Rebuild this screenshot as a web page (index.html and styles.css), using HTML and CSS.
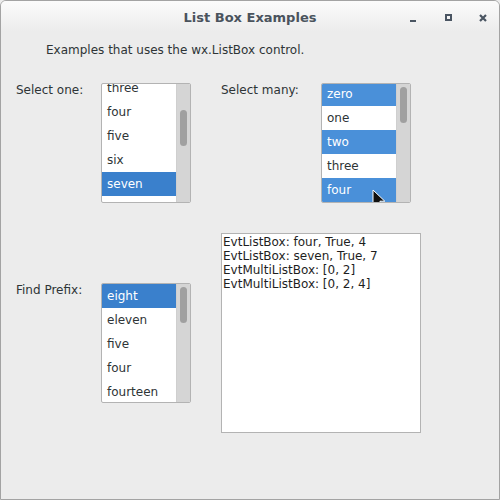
FILE: index.html
```html
<!DOCTYPE html>
<html>
<head>
<meta charset="utf-8">
<link rel="stylesheet" href="styles.css">
</head>
<body>
<div class="window">
  <div class="titlebar">
    <div class="title">List Box Examples</div>
    <div class="controls">
      <span class="ctl min"></span>
      <span class="ctl max"></span>
      <span class="ctl close">
        <svg width="8" height="8" viewBox="0 0 8 8"><path d="M1 1L7 7M7 1L1 7" stroke="#4a5562" stroke-width="2.2"/></svg>
      </span>
    </div>
  </div>
  <div class="intro">Examples that uses the wx.ListBox control.</div>
  <div class="row top">
    <div class="label l1">Select one:</div>
    <div class="listbox">
      <div class="items scrolled">
        <div class="item">three</div>
        <div class="item">four</div>
        <div class="item">five</div>
        <div class="item">six</div>
        <div class="item sel">seven</div>
        <div class="item">eight</div>
      </div>
      <div class="scrollbar"><div class="thumb t1"></div></div>
    </div>
    <div class="label l2">Select many:</div>
    <div class="listbox">
      <div class="items scrolled2">
        <div class="item sel2">zero</div>
        <div class="item">one</div>
        <div class="item sel2">two</div>
        <div class="item">three</div>
        <div class="item sel2">four</div>
      </div>
      <div class="scrollbar"><div class="thumb t2"></div></div>
      <svg class="cursor" width="14" height="21" viewBox="0 0 14 21"><path d="M1 1L1 17L5 13.2L8 19.8L10.8 18.5L7.9 12.2L12.8 12.2Z" fill="#111" stroke="#fff" stroke-width="1"/></svg>
    </div>
  </div>
  <div class="row bottom">
    <div class="label l1 l3">Find Prefix:</div>
    <div class="listbox lb3">
      <div class="items">
        <div class="item sel">eight</div>
        <div class="item">eleven</div>
        <div class="item">five</div>
        <div class="item">four</div>
        <div class="item">fourteen</div>
      </div>
      <div class="scrollbar"><div class="thumb t2"></div></div>
    </div>
    <div class="log">
      <div>EvtListBox: four, True, 4</div>
      <div>EvtListBox: seven, True, 7</div>
      <div>EvtMultiListBox: [0, 2]</div>
      <div>EvtMultiListBox: [0, 2, 4]</div>
    </div>
  </div>
</div>
</body>
</html>
```
FILE: styles.css
```css
html, body {
  margin: 0;
  padding: 0;
  background: #ececec;
}
body {
  font-family: "DejaVu Sans", sans-serif;
  font-size: 12px;
  color: #2e3436;
}
.window {
  width: 500px;
  height: 500px;
  box-sizing: border-box;
  border: 1px solid #a3a3a3;
  border-radius: 6px 6px 0 0;
  background: #ececec;
  overflow: hidden;
}
.titlebar {
  height: 30px;
  position: relative;
  background: linear-gradient(#fbfbfb, #ececec);
  display: flex;
  align-items: center;
  justify-content: center;
}
.title {
  font-weight: bold;
  font-size: 13px;
  color: #4a535d;
  margin-top: 2px;
}
.controls {
  position: absolute;
  right: 0;
  top: 0;
  height: 30px;
  display: flex;
  align-items: center;
}
.ctl {
  width: 8px;
  height: 8px;
  box-sizing: border-box;
  display: flex;
  align-items: center;
  justify-content: center;
  margin-top: 3px;
}
.min {
  margin-right: 28px;
  align-items: flex-end;
}
.min::after {
  content: "";
  width: 6px;
  height: 2px;
  background: #4a5562;
  margin-top: 6px;
}
.max {
  width: 7px;
  height: 7px;
  border: 2px solid #4a5562;
  margin-right: 27px;
}
.close {
  margin-right: 12px;
}
.intro {
  padding-left: 45px;
  margin-top: 11px;
  height: 16px;
  line-height: 16px;
}
.row {
  display: flex;
  align-items: flex-start;
  padding-left: 15px;
}
.row.top {
  margin-top: 25px;
}
.row.bottom {
  margin-top: 30px;
}
.label {
  line-height: 14px;
}
.l1 {
  width: 85px;
}
.l2 {
  width: 100px;
  margin-left: 30px;
}
.l3 {
  margin-top: 50px;
}
.listbox {
  position: relative;
  width: 90px;
  height: 120px;
  box-sizing: border-box;
  border: 1px solid #b3b3b3;
  border-radius: 2px;
  background: #fff;
  display: flex;
  overflow: hidden;
}
.lb3 {
  margin-top: 50px;
}
.items {
  flex: 1;
  overflow: hidden;
}
.scrolled .item:first-child {
  margin-top: -8px;
}
.scrolled2 .item:first-child {
  margin-top: -2px;
}
.item {
  height: 24px;
  line-height: 24px;
  padding-left: 5px;
  color: #2e3436;
}
.item.sel {
  background: #3a80cc;
  color: #fff;
}
.item.sel2 {
  background: #4a90d9;
  color: #fff;
}
.scrollbar {
  width: 13px;
  background: #d5d5d5;
  border-left: 1px solid #cfcfcf;
  position: relative;
}
.thumb {
  position: absolute;
  left: 3px;
  width: 7px;
  height: 36px;
  border-radius: 4px;
  background: #a0a0a0;
}
.t1 { top: 26px; }
.t2 { top: 3px; }
.cursor {
  position: absolute;
  left: 50px;
  top: 105px;
}
.log {
  margin-left: 30px;
  width: 200px;
  height: 200px;
  box-sizing: border-box;
  border: 1px solid #b3b3b3;
  background: #fff;
  padding: 1px 1px;
  line-height: 14px;
  color: #1e1e1e;
}
```
